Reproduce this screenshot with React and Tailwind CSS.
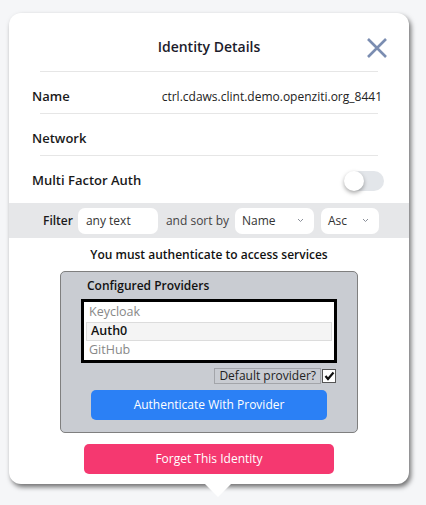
import React from "react";

function Chevron() {
  return (
    <svg width="7" height="5" viewBox="0 0 7 5" className="absolute right-[10px] top-[10px]">
      <path d="M1 1 L3.5 3.5 L6 1" fill="none" stroke="#8a8f99" strokeWidth="1" />
    </svg>
  );
}

export default function App() {
  const font = { fontFamily: '"Open Sans", "Noto Sans", sans-serif' };
  return (
    <div className="w-[426px] h-[505px] bg-[#f5f6f8] overflow-hidden" style={font}>
      <div className="relative ml-[9px] mt-[13px] w-[400px] h-[471px] rounded-[12px] bg-white shadow-[2px_3px_5px_rgba(0,0,0,0.55)] flex flex-col">
        {/* title */}
        <div className="relative h-[59px] mx-[31px] border-b border-[#e6e6e6] flex items-center justify-center">
          <div className="text-[14px] font-semibold text-[#1c1c2b] pt-[9px]">Identity Details</div>
          <svg width="22" height="22" viewBox="0 0 22 22" className="absolute right-[-10px] top-[24px]">
            <path d="M2 2 L20 20 M20 2 L2 20" stroke="#7b8db1" strokeWidth="2.6" />
          </svg>
        </div>
        {/* name */}
        <div className="h-[42px] pt-[9px] mx-[31px] border-b border-[#e6e6e6] flex items-center justify-between">
          <div className="ml-[-8px] text-[13px] font-semibold text-[#1a1a1a]">Name</div>
          <div className="mr-[-4px] text-[12px] text-[#222]">ctrl.cdaws.clint.demo.openziti.org_8441</div>
        </div>
        {/* network */}
        <div className="h-[42px] pt-[9px] mx-[31px] border-b border-[#e6e6e6] flex items-center">
          <div className="ml-[-8px] text-[13px] font-semibold text-[#1a1a1a]">Network</div>
        </div>
        {/* mfa */}
        <div className="h-[47px] pt-[3px] mx-[31px] flex items-center justify-between">
          <div className="ml-[-8px] text-[13px] font-semibold text-[#1a1a1a]">Multi Factor Auth</div>
          <div className="relative mr-[-6px] w-[35px] h-[20px] rounded-full bg-[#e3e6ea]">
            <div className="absolute left-[-5px] top-[0px] w-[20px] h-[20px] rounded-full bg-white shadow-[0_2px_4px_rgba(0,0,0,0.35)]"></div>
          </div>
        </div>
        {/* filter bar */}
        <div className="h-[35px] bg-[#e6e7e9] flex items-center pl-[34px] text-[12px]">
          <span className="font-semibold text-[#1a1a1a]">Filter</span>
          <div className="ml-[5px] w-[80px] h-[26px] rounded-[7px] bg-white flex items-center pl-[8px] text-[#333]">any text</div>
          <span className="ml-[8px] text-[#444]">and sort by</span>
          <div className="relative ml-[6px] w-[79px] h-[26px] rounded-[7px] bg-white flex items-center pl-[7px] text-[#333]">
            Name
            <Chevron />
          </div>
          <div className="relative ml-[7px] w-[58px] h-[26px] rounded-[7px] bg-white flex items-center pl-[7px] text-[#333]">
            Asc
            <Chevron />
          </div>
        </div>
        {/* message */}
        <div className="h-[33px] flex items-center justify-center text-[12px] font-semibold text-[#111]">
          You must authenticate to access services
        </div>
        {/* providers box */}
        <div className="ml-[51px] w-[298px] h-[162px] rounded-[5px] border border-[#7f7f7f] bg-[#c9ccd2] flex flex-col">
          <div className="ml-[26px] mt-[5px] h-[18px] text-[12px] font-semibold text-[#111]">Configured Providers</div>
          <div className="ml-[20px] mt-[4px] w-[256px] h-[64px] border-[3px] border-black bg-white flex flex-col px-[2px] pt-[1px] text-[12.5px]">
            <div className="h-[19px] pl-[3px] flex items-center text-[#888]">Keycloak</div>
            <div className="h-[19px] pl-[4px] flex items-center bg-[#f4f4f4] border border-[#dcdcdc] font-semibold text-[#111]">Auth0</div>
            <div className="h-[19px] pl-[3px] flex items-center text-[#888]">GitHub</div>
          </div>
          <div className="mt-[5px] flex justify-end mr-[21px] items-center gap-[1px]">
            <div className="h-[16px] px-[4px] border border-[#a3a5aa] flex items-center text-[12px] text-[#222]">Default provider?</div>
            <div className="w-[14px] h-[14px] bg-white border border-[#555] flex items-center justify-center">
              <svg width="11" height="10" viewBox="0 0 11 10">
                <path d="M1.5 5 L4 8 L9.5 1.5" fill="none" stroke="#111" strokeWidth="2.2" />
              </svg>
            </div>
          </div>
          <div className="ml-[30px] mt-[6px] w-[236px] h-[30px] rounded-[5px] bg-[#2b80f5] flex items-center justify-center text-[12px] text-white">
            Authenticate With Provider
          </div>
        </div>
        {/* forget */}
        <div className="ml-[75px] mt-[11px] w-[250px] h-[30px] rounded-[5px] bg-[#f53870] flex items-center justify-center text-[12px] text-white">
          Forget This Identity
        </div>
        {/* arrow */}
        <div className="absolute left-[196px] bottom-[-13px] w-0 h-0 border-l-[13px] border-r-[13px] border-t-[13px] border-l-transparent border-r-transparent border-t-white"></div>
      </div>
    </div>
  );
}
